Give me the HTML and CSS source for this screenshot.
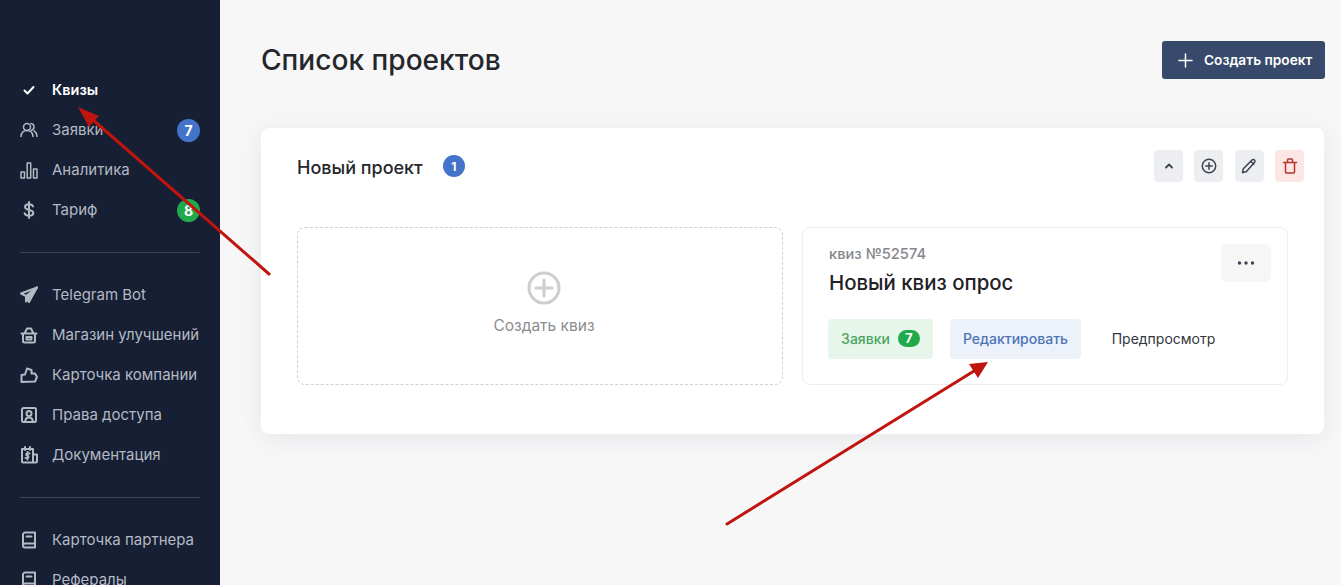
FILE: index.html
```html
<!DOCTYPE html>
<html lang="ru">
<head>
<meta charset="utf-8">
<title>Список проектов</title>
<link rel="stylesheet" href="styles.css">
</head>
<body>
<div class="app">
  <aside class="sidebar">
    <nav class="nav-group">
      <a class="nav-item active"><svg class="nav-icon" viewBox="0 0 18 18"><path d="M4.500 9.500l3 3 6-6.500" stroke-width="2"/></svg><span>Квизы</span></a>
      <a class="nav-item"><svg class="nav-icon" viewBox="0 0 18 18"><circle cx="7" cy="6" r="3.500"/><path d="M1 15.500c.3-3.800 2.600-6 6-6s5.700 2.200 6 6M11 2.500c1.800.2 3 1.700 3 3.500 0 1.500-1 2.800-2.400 3.200M14 10c1.800.8 2.800 2.800 3 5.500"/></svg><span>Заявки</span><b class="nav-badge blue">7</b></a>
      <a class="nav-item"><svg class="nav-icon" viewBox="0 0 18 18"><rect x="1" y="11" width="3.500" height="6"/><rect x="7.200" y="2" width="3.500" height="15"/><rect x="13.500" y="8" width="3.500" height="9"/></svg><span>Аналитика</span></a>
      <a class="nav-item"><svg class="nav-icon dollar" viewBox="0 0 18 18"><path d="M13 5.500C12.500 4 11 3.300 9 3.300c-2.500 0-4 1.200-4 2.800 0 3.900 8.300 1.800 8.300 5.800 0 1.700-1.700 2.800-4.300 2.800-2.300 0-3.900-.9-4.400-2.500M9 1v16"/></svg><span>Тариф</span><b class="nav-badge green">8</b></a>
    </nav>
    <hr class="nav-divider">
    <nav class="nav-group">
      <a class="nav-item"><svg class="nav-icon bold" viewBox="0 0 18 18"><path d="M17 1.500L1 7.500l5 2.500 3 6z"/><path class="fill" d="M17 1.500L6 10v5.500l3-3z"/></svg><span>Telegram Bot</span></a>
      <a class="nav-item"><svg class="nav-icon bold" viewBox="0 0 18 18"><path d="M1.500 7.500h15M3 7.500V15a1.500 1.500 0 0 0 1.500 1.500h9A1.500 1.500 0 0 0 15 15V7.500M4.500 7.500L7 2.500h4l2.500 5M6.500 11h5v2.500h-5z"/></svg><span>Магазин улучшений</span></a>
      <a class="nav-item"><svg class="nav-icon bold" viewBox="0 0 18 18"><path d="M1.500 16V9l3.500-.5 2-6 4.500 1.500v3.500h3.500l2 3.500-2 4.500z"/></svg><span>Карточка компании</span></a>
      <a class="nav-item"><svg class="nav-icon bold" viewBox="0 0 18 18"><rect x="2" y="2" width="14" height="14" rx="1.500"/><circle cx="9" cy="7.500" r="2.500"/><path d="M5 16c.3-3 1.800-4.500 4-4.500s3.700 1.500 4 4.500"/></svg><span>Права доступа</span></a>
      <a class="nav-item"><svg class="nav-icon bold" viewBox="0 0 18 18"><path d="M13 16.500H3a1 1 0 0 1-1-1V3h11zM13 8.500h4v7a1 1 0 0 1-1 1h-3M5 1v3M10 1v3M9.500 7.500h-2.200c-1.500 0-1.500 2.200 0 2.200s1.600 2.300 0 2.300H5.500M7.500 6v7.500"/></svg><span>Документация</span></a>
    </nav>
    <hr class="nav-divider">
    <nav class="nav-group">
      <a class="nav-item"><svg class="nav-icon bold" viewBox="0 0 18 18"><path d="M15 16.500H5a2 2 0 0 1-2-2v-11a2 2 0 0 1 2-2h10zM3 14.500a2 2 0 0 1 2-2h10M6.500 5.500h5"/></svg><span>Карточка партнера</span></a>
      <a class="nav-item"><svg class="nav-icon bold" viewBox="0 0 18 18"><path d="M15 16.500H5a2 2 0 0 1-2-2v-11a2 2 0 0 1 2-2h10zM3 14.500a2 2 0 0 1 2-2h10M6.500 5.500h5"/></svg><span>Рефералы</span></a>
    </nav>
  </aside>

  <main class="main">
    <header class="page-head">
      <h1 class="page-title">Список проектов</h1>
      <button class="create-btn"><svg class="create-plus" viewBox="0 0 16 16"><path d="M8 1v14M1 8h14"/></svg>Создать проект</button>
    </header>

    <section class="project">
      <div class="project-head">
        <h2 class="project-title">Новый проект</h2>
        <b class="project-count">1</b>
        <div class="tools">
          <button class="tool"><svg viewBox="0 0 16 16"><path d="M5 9.500l3-3 3 3" stroke-width="1.800"/></svg></button>
          <button class="tool"><svg viewBox="0 0 16 16"><circle cx="8" cy="8" r="6.700"/><path d="M8 4.800v6.400M4.800 8h6.400"/></svg></button>
          <button class="tool"><svg viewBox="0 0 16 16"><path d="M1.500 14.500l.8-3.700L11 2c.8-.8 1.800-.8 2.500 0 .7.700.7 1.700 0 2.500l-8.300 9.200zM9.800 3.300l3 3"/></svg></button>
          <button class="tool danger"><svg viewBox="0 0 16 16"><path d="M1.500 4.500h13M3.500 4.500V14a1 1 0 0 0 1 1h7a1 1 0 0 0 1-1V4.500M5.500 4.500V2a1 1 0 0 1 1-1h3a1 1 0 0 1 1 1v2.500"/></svg></button>
        </div>
      </div>

      <div class="quiz-grid">
        <div class="quiz-new">
          <svg class="quiz-new-icon" viewBox="0 0 34 34"><circle cx="17" cy="17" r="15"/><path d="M17 9v16M9 17h16"/></svg>
          <span>Создать квиз</span>
        </div>
        <article class="quiz-card">
          <div class="quiz-num">квиз №52574</div>
          <div class="quiz-name">Новый квиз опрос</div>
          <button class="more"><svg viewBox="0 0 18 4"><circle cx="2.500" cy="2" r="1.700"/><circle cx="9" cy="2" r="1.700"/><circle cx="15.500" cy="2" r="1.700"/></svg></button>
          <div class="quiz-actions">
            <button class="act act-green">Заявки<b class="act-badge">7</b></button>
            <button class="act act-blue">Редактировать</button>
            <button class="act act-plain">Предпросмотр</button>
          </div>
        </article>
      </div>
    </section>
  </main>
</div>

<svg class="arrows" viewBox="0 0 1341 585">
  <path d="M269 274L92 119" />
  <path class="head" d="M78 107L99 116L89 127z"/>
  <path d="M727 524L974 371" />
  <path class="head" d="M988 362L978 378L969 364z"/>
</svg>
</body>
</html>
```
FILE: styles.css
```css
* { box-sizing: border-box; }
html, body { margin: 0; height: 585px; overflow: hidden; }
body { font-family: "Inter", "Noto Sans", sans-serif; background: #f7f7f8; color: #1f2126; }
button { font-family: inherit; border: 0; cursor: pointer; }
svg { display: block; fill: none; stroke: currentColor; stroke-linecap: round; stroke-linejoin: round; stroke-width: 1.5; }

.app { display: flex; height: 585px; }

.sidebar { width: 220px; flex: none; background: #161f33; padding: 70px 20px 0; overflow: hidden; color: #b4b9c4; }
.nav-item { display: flex; align-items: center; height: 40px; font-size: 15px; position: relative; white-space: nowrap; }
.nav-item span { padding-bottom: 2px; }
.nav-item.active { color: #fff; font-weight: 600; font-size: 14.500px; }
.nav-icon { width: 18px; height: 18px; margin-right: 14px; flex: none; }
.nav-icon.bold, .nav-icon.dollar { stroke-width: 2; }
.nav-icon .fill { fill: currentColor; }
.nav-badge { margin-left: auto; width: 23px; height: 23px; border-radius: 50%; color: #fff; font-size: 14px; font-weight: 700; display: flex; align-items: center; justify-content: center; }
.nav-badge.blue { background: #4473ca; }
.nav-badge.green { background: #22a94c; }
.nav-divider { border: 0; height: 1px; background: #3e4557; margin: 22px 0; }

.main { flex: 1; min-width: 0; padding: 41px 16px 0 41px; }
.page-head { display: flex; justify-content: space-between; align-items: center; height: 38px; }
.page-title { margin: 0; font-size: 28.100px; font-weight: 500; color: #25272c; }
.create-btn { display: flex; align-items: center; width: 163px; height: 38px; background: #384a6b; color: #fff; border-radius: 3px; font-size: 13.700px; font-weight: 600; padding: 0 0 0 16px; white-space: nowrap; }
.create-plus { width: 15px; height: 15px; margin-right: 11px; stroke-width: 1.600; }

.project { margin-top: 49px; height: 306px; background: #fff; border-radius: 8px; padding: 22px 20px 0 36px; box-shadow: 0 4px 24px rgba(30, 40, 70, .08); width: 1063px; }
.project-head { display: flex; align-items: center; height: 32px; }
.project-title { margin: 0; padding-top: 2px; font-size: 18px; font-weight: 500; color: #25272c; }
.project-count { width: 22px; height: 22px; margin-left: 20px; border-radius: 50%; background: #4473ca; color: #fff; font-size: 12px; font-weight: 700; display: flex; align-items: center; justify-content: center; }
.tools { margin-left: auto; display: flex; gap: 11.300px; }
.tool { width: 29px; height: 32px; padding: 0; background: #edeef1; color: #3c4350; border-radius: 4px; display: flex; align-items: center; justify-content: center; }
.tool svg { width: 16px; height: 16px; }
.tool.danger { background: #fbe6e4; color: #b5352b; }

.quiz-grid { display: flex; gap: 19px; margin-top: 45px; width: 991px; }
.quiz-new { width: 486px; height: 158px; border: 1px dashed #cfd0d3; border-radius: 8px; display: flex; flex-direction: column; align-items: center; padding: 43px 0 0 8px; color: #8a8c90; font-size: 15.500px; gap: 11px; }
.quiz-new-icon { width: 34px; height: 34px; color: #cdced1; stroke-width: 3; }
.quiz-card { width: 486px; height: 158px; border: 1px solid #eeeef0; border-radius: 8px; position: relative; padding: 17px 0 0 26px; }
.quiz-num { font-size: 14.700px; font-weight: 500; color: #85878c; line-height: 18px; }
.quiz-name { font-size: 20.400px; font-weight: 500; color: #1f2126; line-height: 26px; margin-top: 7px; }
.more { position: absolute; top: 16px; right: 16px; width: 50px; height: 38px; background: #f6f6f7; border-radius: 6px; color: #3c4350; display: flex; align-items: center; justify-content: center; padding: 0; }
.more svg { width: 18px; height: 4px; fill: currentColor; stroke: none; }
.quiz-actions { display: flex; margin: 23px 0 0 -1px; }
.act { height: 40px; border-radius: 4px; font-size: 14px; font-weight: 500; display: flex; align-items: center; justify-content: center; padding: 0 0 2px; white-space: nowrap; }
.act-green { width: 105px; background: #e6f6ea; color: #4ba35f; gap: 8px; }
.act-badge { width: 22px; height: 17px; border-radius: 9px; background: #22a94c; color: #fff; font-size: 13px; font-weight: 700; display: flex; align-items: center; justify-content: center; }
.act-blue { width: 131px; margin-left: 17px; background: #ecf1fa; color: #4d75b5; }
.act-plain { width: 107px; margin-left: 29px; background: transparent; color: #33363c; font-weight: 400; }

.arrows { position: absolute; left: 0; top: 0; width: 1341px; height: 585px; pointer-events: none; color: #c0140f; stroke-width: 3; }
.arrows .head { fill: currentColor; stroke: none; }
```
